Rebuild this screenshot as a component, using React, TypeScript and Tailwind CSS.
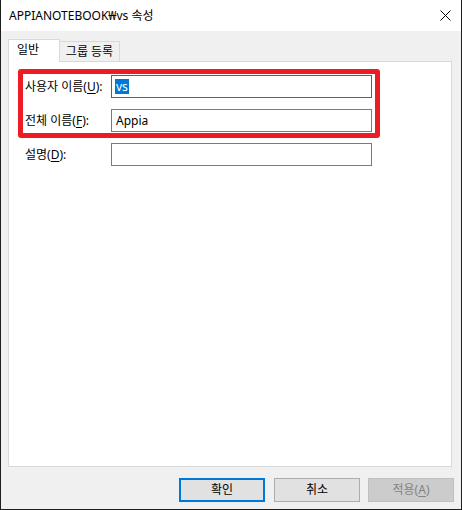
import React from "react";

const font = { fontFamily: '"Noto Sans", "Noto Sans CJK KR", sans-serif' };

function Label({ text, k }: { text: string; k: string }) {
  return (
    <span className="text-[12px] text-black leading-none whitespace-nowrap">
      {text}(<span className="underline underline-offset-2">{k}</span>):
    </span>
  );
}

export default function App() {
  return (
    <div
      className="w-[462px] h-[510px] bg-[#f0f0f0] border-l border-r border-b border-[#1f1f1f] flex flex-col text-black"
      style={font}
    >
      {/* Title bar */}
      <div className="h-[31px] bg-white flex items-center justify-between pl-[8px] pr-[9px] shrink-0">
        <span className="text-[12px] leading-none">APPIANOTEBOOK₩vs 속성</span>
        <svg width="11" height="11" viewBox="0 0 11 11" className="mr-[1px]">
          <path d="M0.5 0.5 L10.5 10.5 M10.5 0.5 L0.5 10.5" stroke="#000" strokeWidth="1" />
        </svg>
      </div>

      <div className="flex flex-col px-[7px] pt-[8px]">
        {/* Tabs */}
        <div className="flex items-end h-[22px] relative z-10">
          <div className="w-[52px] h-[23px] bg-white border border-b-0 border-[#d9d9d9] flex items-start pl-[8px] pt-[4px] -mb-px">
            <span className="text-[12px] leading-none">일반</span>
          </div>
          <div className="w-[60px] h-[20px] border-t border-r border-[#d9d9d9] bg-[#f0f0f0] flex items-center justify-center">
            <span className="text-[12px] leading-none">그룹 등록</span>
          </div>
        </div>

        {/* Panel */}
        <div className="w-[444px] h-[406px] bg-white border border-[#d9d9d9] flex flex-col pl-[9px] pt-[7px]">
          <div className="w-[362px] border-[5px] border-[#ed1c24] rounded-[3px] flex flex-col pt-[1px] pb-[1px] pl-[2px] pr-[3px] gap-[11px]">
            <div className="flex items-center justify-between">
              <Label text="사용자 이름" k="U" />
              <div className="w-[261px] h-[23px] border border-[#0078d7] flex items-center pl-[3px]">
                <span className="bg-[#0078d7] text-white text-[12px] leading-[15px] px-[1px]">vs</span>
              </div>
            </div>
            <div className="flex items-center justify-between">
              <Label text="전체 이름" k="F" />
              <div className="w-[261px] h-[23px] border border-[#7a7a7a] flex items-center pl-[4px]">
                <span className="text-[12px] leading-none">Appia</span>
              </div>
            </div>
          </div>
          <div className="w-[362px] flex items-center justify-between pl-[7px] pr-[8px] mt-[5px]">
            <Label text="설명" k="D" />
            <div className="w-[261px] h-[23px] border border-[#7a7a7a]" />
          </div>
        </div>

        {/* Buttons */}
        <div className="flex justify-end items-center mt-[11px] pr-[0px]">
          <div className="w-[86px] h-[24px] bg-[#e1e1e1] border-2 border-[#0078d7] flex items-center justify-center">
            <span className="text-[12px] leading-none">확인</span>
          </div>
          <div className="w-[86px] h-[24px] bg-[#e1e1e1] border border-[#adadad] flex items-center justify-center ml-[9px]">
            <span className="text-[12px] leading-none">취소</span>
          </div>
          <div className="w-[86px] h-[24px] bg-[#cccccc] border border-[#bfbfbf] flex items-center justify-center ml-[8px]">
            <span className="text-[12px] leading-none text-[#838383]">
              적용(<span className="underline underline-offset-2">A</span>)
            </span>
          </div>
        </div>
      </div>
    </div>
  );
}
